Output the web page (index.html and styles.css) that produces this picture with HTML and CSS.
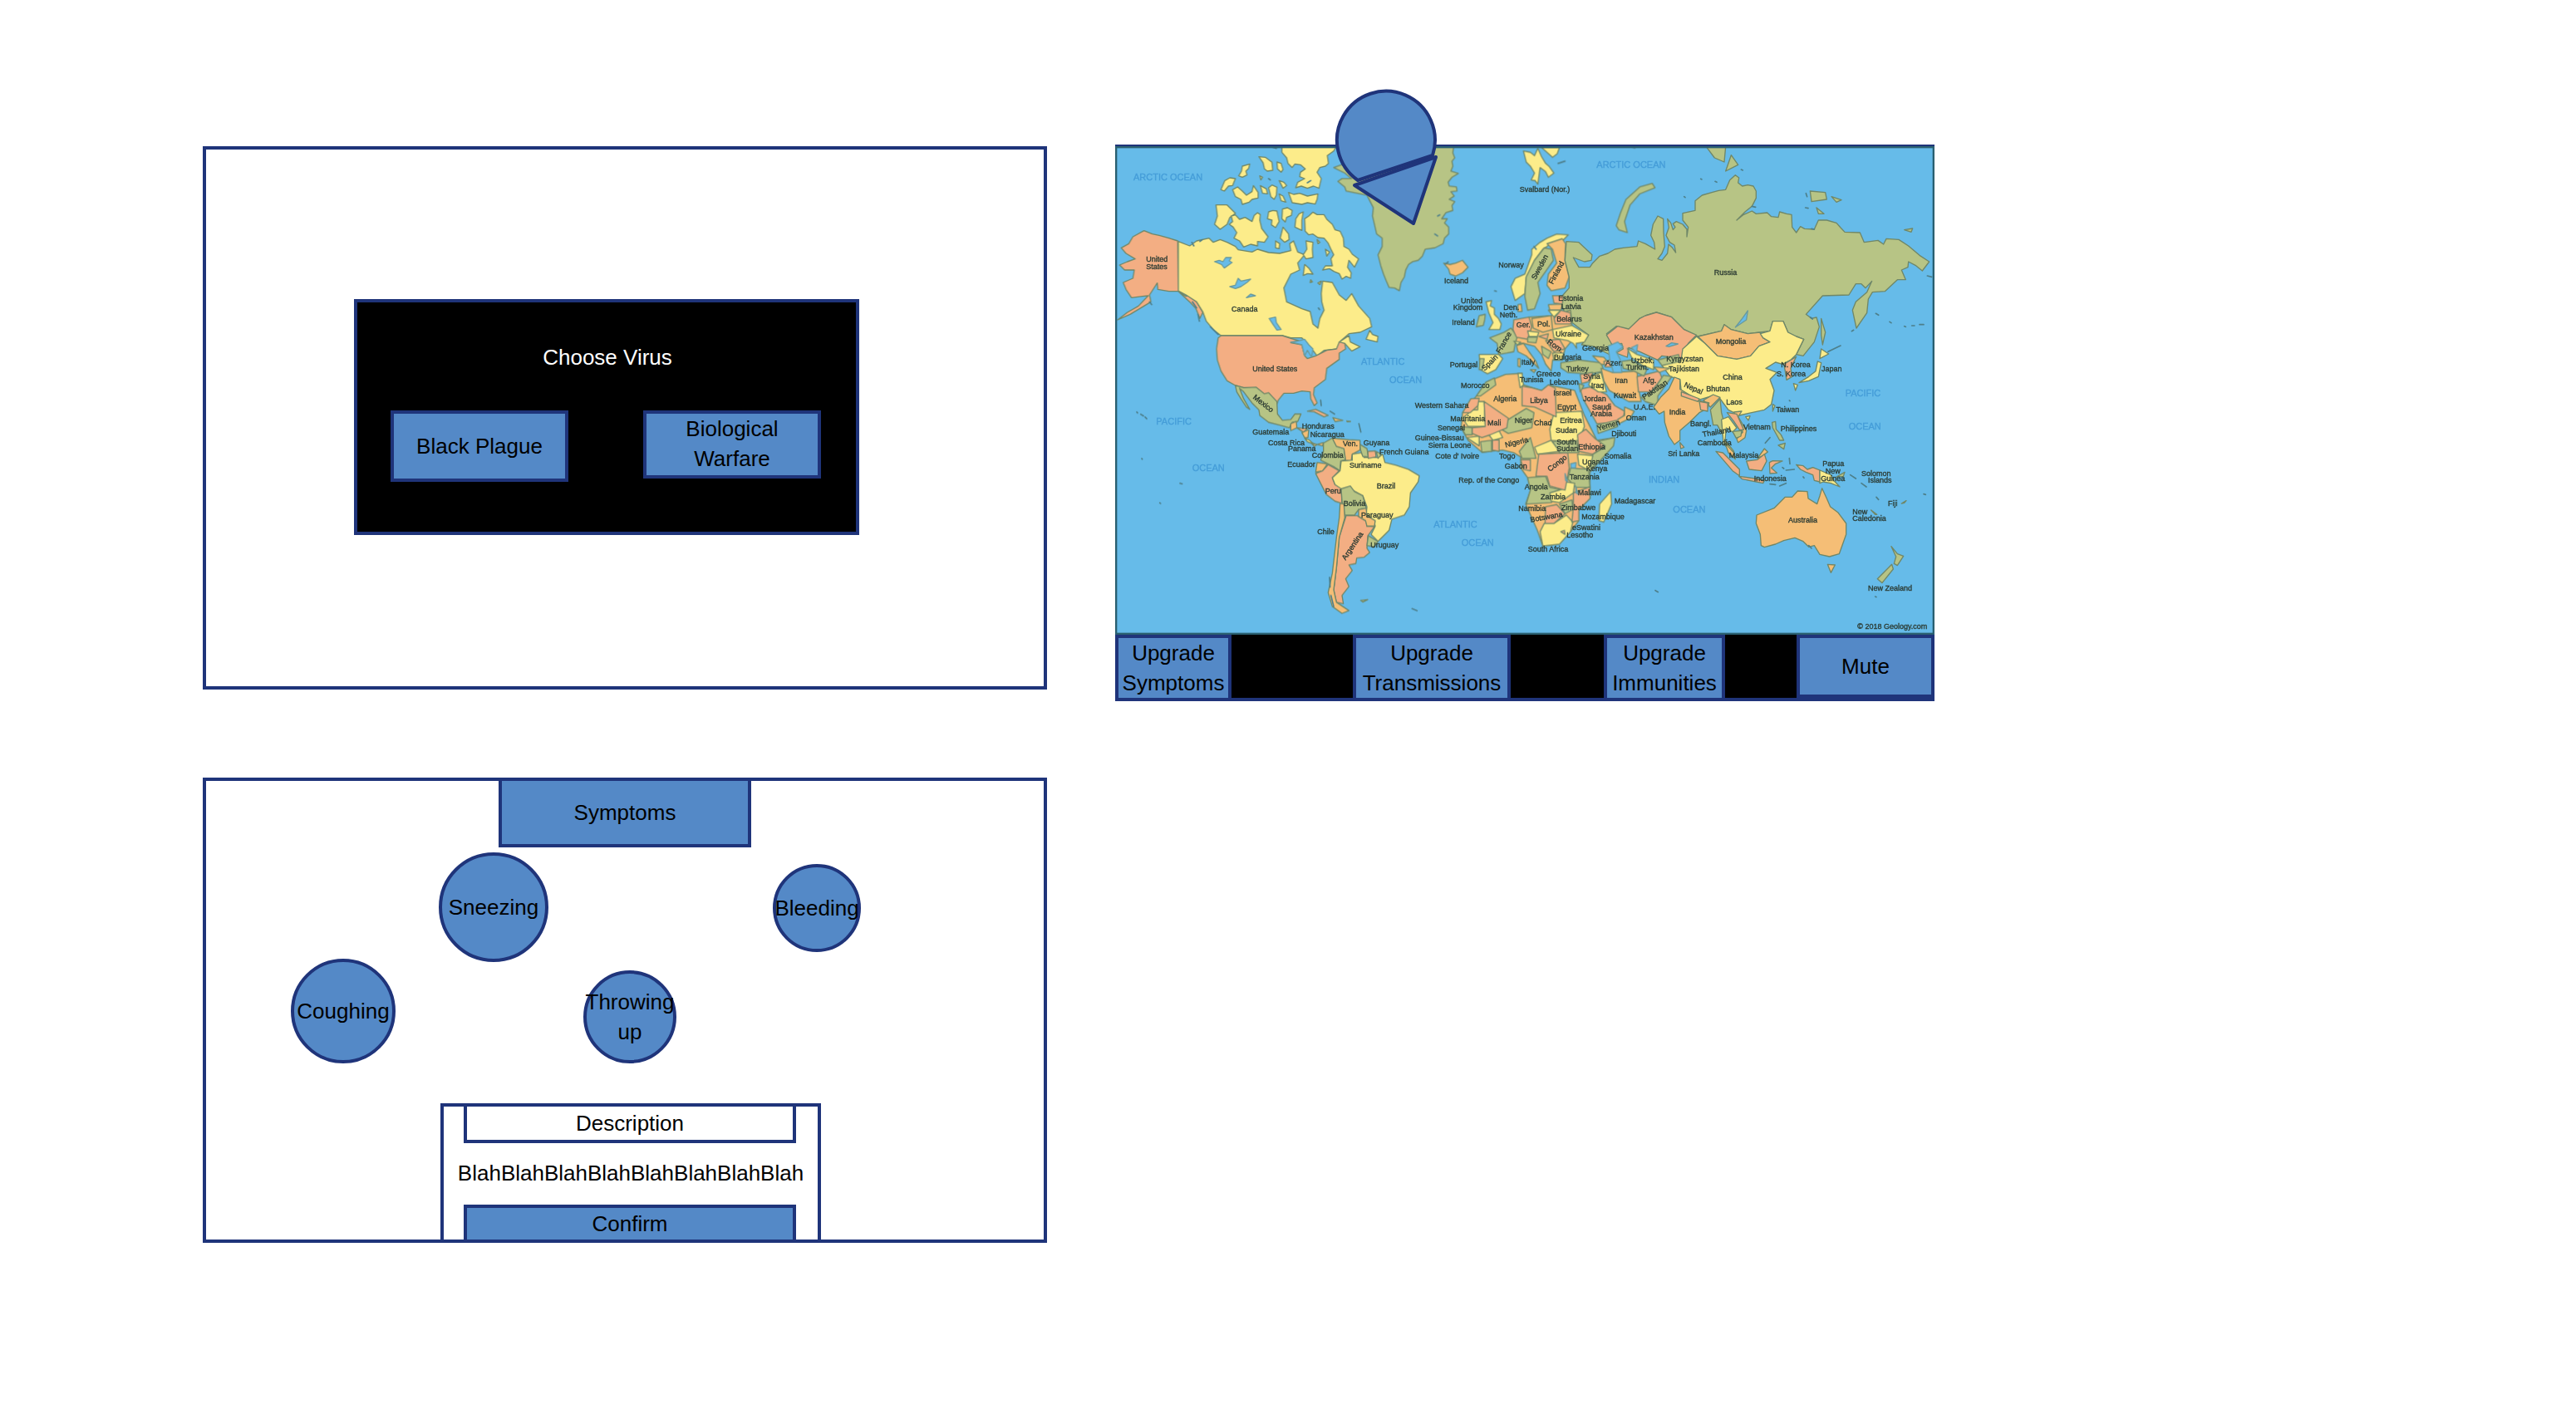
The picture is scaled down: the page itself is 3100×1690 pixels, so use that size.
FILE: index.html
```html
<!DOCTYPE html>
<html lang="en">
<head>
<meta charset="utf-8">
<title>Virus game wireframes</title>
<link rel="stylesheet" href="styles.css">
</head>
<body>
<main class="board">
  <section class="screen screen-choose">
    <div class="dialog">
      <h2 class="dialog-title">Choose Virus</h2>
      <div class="dialog-actions">
        <button class="box-button tall" type="button">Black Plague</button>
        <button class="box-button" type="button">Biological Warfare</button>
      </div>
    </div>
  </section>

  <section class="screen-map">
    <svg class="map" viewBox="0 0 2958 1764" role="img" aria-label="World map">
      <defs>
        <filter id="soft" x="0" y="0" width="100%" height="100%"><feGaussianBlur stdDeviation="2"/></filter>
      </defs>
      <rect class="sea" width="2958" height="1764"/>
      <g filter="url(#soft)">
      <g class="land">
        <!-- North America -->
        <g transform="translate(-6 -228)">
          <path class="s" d="M232 570L200 560L165 550L140 545L110 533L70 555L55 580L28 595L45 615L78 635L50 645L22 657L40 675L75 675L70 705L35 720L45 745L65 775L105 770L125 768L90 805L50 828L15 855L60 835L110 805L135 790L130 765L158 722L160 745L200 752L234 752L262 770L285 765L322 828L312 850L298 815L280 795L234 752Z"/>
          <path class="y" d="M234 572L275 588L300 570L345 560L360 575L385 565L410 575L440 590L450 602L500 610L520 600L560 612L600 615L640 605L636 580L650 570L665 610L690 620L665 650L672 675L640 690L615 740L625 790L680 815L710 825L720 870L738 885L745 850L760 820L752 790L750 760L755 715L790 720L815 765L840 785L860 760L885 805L925 850L932 880L890 900L850 905L815 935L850 912L855 935L890 952L860 968L835 940L810 960L760 965L735 985L720 965L700 940L680 920L640 920L610 912L388 912L360 890L335 860L322 825L300 790L262 765L234 750Z"/>
          <path class="s" d="M388 912L610 912L640 922L668 930L640 938L680 945L690 985L700 995L730 985L770 965L805 960L815 935L835 940L838 960L815 975L815 998L770 1030L765 1070L725 1100L722 1125L735 1155L725 1165L712 1140L710 1115L680 1112L650 1120L615 1120L595 1145L590 1158L575 1140L560 1120L545 1125L515 1100L470 1100L440 1092L410 1075L388 1040L375 1000L372 960L378 920Z"/>
          <path class="y" d="M608 230L805 230L795 245L772 262L776 290L765 300L745 305L735 322L750 345L742 380L722 372L700 380L678 372L658 378L665 358L690 345L672 338L675 322L692 310L675 295L655 292L645 305L630 290L625 270L608 250Z
            M525 266L548 268L572 286L575 315L555 318L545 310L540 288ZM590 285L605 290L612 312L605 322L592 310ZM465 300L492 292L488 308L478 318L482 332L465 340L452 335L462 318ZM388 385L402 352L420 342L440 345L430 370L415 372L400 390ZM430 385L448 375L465 390L480 405L500 392L505 370L522 395L522 415L500 420L490 430L465 438L460 420L440 410ZM530 370L552 382L556 400L538 398ZM528 335L538 340L532 350ZM560 378L572 368L590 376L588 405L580 420L568 410ZM632 395L650 402L672 398L700 408L738 400L735 420L728 437L700 432L680 438L645 432ZM598 400L612 408L622 430L605 425ZM598 352L615 358L625 370L612 380Z
            M370 440L410 440L425 455L440 470L420 485L410 510L385 528L365 510L375 480Z
            M425 480L440 476L455 492L475 485L500 500L508 478L520 468L530 475L528 495L535 525L558 555L545 575L520 572L520 588L495 582L470 592L455 570L435 560L445 540L432 520L418 510L430 500Z
            M560 465L575 460L590 462L598 500L585 522L570 512L572 495L556 490ZM610 455L628 450L645 460L642 478L625 485L620 502L608 490ZM612 520L632 545L634 565L618 575L602 560Z
            M655 520L658 490L670 472L685 465L680 495L680 532ZM692 535L690 490L705 480L720 466L735 475L760 475L770 492L790 510L800 530L818 535L830 560L832 590L850 600L862 618L885 635L870 665L850 640L845 665L858 685L856 705L840 698L825 708L815 688L795 680L780 670L755 675L765 660L790 660L785 635L795 620L785 600L775 578L760 560L738 558L720 545L705 548Z
            M695 570L720 575L718 600L720 630L695 635L685 620L698 600ZM765 600L780 610L770 625ZM690 655L705 668L720 690L700 688L685 695ZM585 570L600 580L598 598L585 595ZM735 565L745 575L738 580ZM712 710L718 718L710 720ZM738 722L750 715L745 728ZM912 925L925 893L935 908L955 915L952 935Z"/>
          <path class="w" d="M365 645L382 640L395 645L405 630L425 630L418 642L428 648L400 668L390 655ZM420 735L440 730L450 705L460 715L495 708L482 720L460 735L440 742ZM480 775L495 762L512 768L492 772ZM562 850L585 845L588 865L605 890L590 892L575 870ZM640 935L665 932L690 925L705 945L720 960L715 990L700 965L690 985L680 945Z"/>
          <path class="dots" d="M283 575L290 588M312 572L320 566M350 880L378 908M305 835L310 860M285 790L300 812M130 790L138 800M740 812L744 818M575 232L588 236M700 360L712 352M560 345L566 350"/>
        </g>

        <!-- Central and South America -->
        <g transform="translate(-6 762)">
          <path class="g" d="M440 102L470 110L515 108L545 132L560 128L590 160L592 205L610 228L640 225L655 205L677 205L665 232L645 235L635 255L600 245L560 235L528 210L525 190L500 165L470 125L455 112L470 150L492 188L480 180L460 150L445 125Z"/>
          <path class="o" d="M640 240L660 232L662 255L640 265ZM680 272L705 262L702 290L690 290ZM712 308L735 315L758 308L755 320L735 315L725 322ZM792 218L828 228L800 232ZM842 230L856 232L844 233Z"/>
          <path class="s" d="M662 255L700 258L685 270ZM700 195L730 188L775 210L760 215L725 197Z"/>
          <path class="y" d="M690 292L708 300L725 315L700 305Z"/>
          <path class="g" d="M758 310L790 292L805 320L832 330L838 370L820 375L818 410L795 395L765 380L748 372L758 340Z"/>
          <path class="o" d="M790 292L850 298L890 300L890 335L862 350L858 375L838 372L832 330L805 322Z"/>
          <path class="o" d="M735 380L772 385L755 410L730 415Z"/>
          <path class="s" d="M730 420L755 410L775 388L815 410L790 435L800 460L822 470L825 528L800 520L768 495L745 450Z"/>
          <path class="y" d="M862 350L895 345L905 362L955 362L972 350L980 380L1020 390L1065 405L1104 428L1100 450L1072 490L1068 540L1050 570L1005 585L995 625L955 665L930 640L945 610L940 590L912 570L915 540L900 500L855 475L822 475L800 460L790 435L818 410L822 375L862 372Z"/>
          <path class="g" d="M890 315L915 330L920 360L900 358L892 335ZM948 340L968 350L955 365Z"/>
          <path class="s" d="M918 340L945 338L948 360L920 365Z"/>
          <path class="g" d="M822 475L855 465L870 485L900 500L912 545L885 550L870 570L835 570L825 520Z"/>
          <path class="s" d="M840 572L880 572L912 592L915 610L942 612L918 645L915 690L925 705L905 722L878 725L875 745L850 750L862 770L838 800L850 828L825 860L830 890L805 885L795 840L805 760L815 650Z"/>
          <path class="o" d="M885 550L912 545L915 572L945 590L942 610L915 610L910 590L885 575Z"/>
          <path class="o" d="M818 528L832 530L835 580L815 650L805 760L795 840L805 885L850 915L825 925L790 900L775 850L790 780L805 650L815 580Z"/>
          <path class="g" d="M920 645L955 665L940 685L915 680ZM892 878L918 875L900 884Z"/>
          <path class="dots" d="M98 206L108 212M114 216L120 222M84 198L87 201M886 240L893 270M748 155L750 175M782 195L798 205M780 795L782 830M785 860L795 900M1078 908L1096 915M102 366L104 368M240 455L248 457M167 526L170 528"/>
        </g>

        <!-- Greenland, the north Atlantic and Scandinavia -->
        <g transform="translate(954 -228)">
          <path class="g" d="M-165 305L-110 285L0 228L268 230L265 252L272 270L262 282L265 300L258 318L285 326L262 340L248 358L252 372L278 375L280 390L258 392L270 408L252 420L272 428L262 442L265 460L240 468L225 490L245 490L235 505L250 520L250 545L235 560L230 580L200 595L165 600L155 625L140 640L120 645L105 655L95 675L90 700L78 720L72 750L55 740L35 738L25 715L15 690L5 660L-5 620L10 590L10 560L-10 545L-18 510L-25 480L-22 450L-45 405L-120 390L-125 375L-150 355L-135 345L-100 345L-125 325Z"/>
          <path class="o" d="M232 650L255 655L275 650L300 640L320 665L300 685L275 697L255 690L250 672Z"/>
          <path class="y" d="M520 245L545 250L560 262L572 235L585 265L600 290L612 300L630 325L610 340L600 320L580 305L572 365L562 352L548 350L560 325L545 300L530 285ZM585 232L650 232L642 255L625 268L605 250Z"/>
          <path class="y" d="M385 790L405 785L400 805L415 812L415 835L430 850L440 870L435 890L395 890L410 865L395 830Z"/>
          <path class="g" d="M360 840L382 835L380 855L375 875L350 880Z"/>
          <path class="y" d="M475 735L490 705L525 690L550 620L550 600L580 575L605 560L640 545L682 548L660 570L620 580L590 600L560 640L530 700L525 760L490 785Z"/>
          <path class="g" d="M595 595L620 600L628 640L600 680L572 720L580 760L560 815L535 820L525 770L530 700L560 640Z"/>
          <path class="o" d="M605 580L660 562L672 580L670 640L685 700L670 740L620 750L605 730L610 690L640 650L625 600ZM500 800L512 798L515 825L500 825Z"/>
          <path class="g" d="M855 515L870 470L890 420L940 375L985 362L995 378L940 400L905 440L885 500L895 540L865 530Z"/>
          <path class="dots" d="M240 652L248 646M645 290L670 282M416 750L422 752M558 590L566 600M915 232L922 234M210 480L218 476M200 545L210 552"/>
        </g>

        <!-- Russia, central Asia and China -->
        <g transform="translate(1914 -18)">
          <path class="g" d="M-285 362L-240 365L-192 410L-195 430L-220 435L-260 420L-240 455L-200 455L-190 440L-165 415L-135 405L-110 390L-80 385L-30 380L-25 360L0 370L35 390L32 365L20 340L28 300L45 270L65 280L66 330L70 380L60 405L45 425L60 430L80 405L84 372L98 385L110 402L105 375L88 365L75 340L85 312L80 280L92 295L100 320L108 310L100 298L112 290L135 300L150 318L150 345L155 310L135 285L135 260L180 250L180 215L205 195L240 185L265 178L290 175L305 140L325 122L338 132L335 150L350 162L370 158L390 162L400 180L400 205L385 235L360 255L330 285L355 265L385 252L400 262L440 258L455 272L480 275L485 255L510 262L528 265L530 310L545 330L560 308L575 316L610 318L625 285L655 285L690 295L705 312L720 328L775 330L790 365L840 358L860 372L870 352L915 355L950 378L990 412L1025 435L1000 468L975 448L950 435L948 455L925 465L940 500L910 500L865 542L820 545L805 570L800 620L762 675L748 610L760 580L800 545L818 505L795 530L780 515L760 515L735 555L640 558L580 625L600 640L618 636L628 670L610 725L570 775L545 770L572 715L545 705L515 690L498 650L460 650L450 685L415 690L370 695L310 680L285 662L275 685L190 705L140 680L95 635L40 618L0 630L-20 640L-60 680L-105 668L-140 695L-125 720L-110 780L-140 765L-190 740L-230 735L-205 700L-245 670L-270 650L-295 610L-310 570L-275 530L-275 490L-290 430Z"/>
          <path class="g" d="M220 20L290 20L285 75L250 60ZM310 50L335 85L290 108ZM595 180L650 185L655 210L600 218ZM672 200L708 212L690 220ZM618 240L645 262L625 262ZM935 320L965 315L960 328ZM635 640L650 690L640 735L635 700Z"/>
          <path class="s" d="M0 630L40 618L95 635L140 680L185 700L155 730L130 785L60 775L45 790L-20 760L-60 745L-65 780L-105 765L-80 750L-85 730L-120 735L-140 700L-100 668L-60 678L-20 640Z"/>
          <path class="o" d="M190 705L275 685L285 662L310 680L370 695L415 690L425 710L450 725L410 740L380 775L330 787L260 775L215 730Z"/>
          <path class="y" d="M185 705L215 730L260 775L330 787L380 775L410 740L450 725L425 710L415 695L450 685L460 650L498 650L515 690L545 705L572 715L545 770L525 790L495 805L470 798L435 820L475 835L450 860L465 900L455 950L430 970L370 983L340 990L300 970L270 930L240 920L190 935L130 905L125 860L90 850L60 810L130 785L135 750Z"/>
          <path class="s" d="M500 805L545 778L525 820L530 850L510 862L505 830Z"/>
          <path class="y" d="M635 750L662 768L630 785ZM622 795L635 800L625 850L590 865L555 872L590 850L615 830ZM535 875L550 880L542 900ZM460 950L468 955L460 975Z"/>
          <path class="w" d="M370 612L365 645L325 672L350 640ZM75 740L95 728L118 732L85 742Z"/>
          <path class="dots" d="M140 200L144 203M200 136L204 138M252 145L258 148M346 102L352 105M580 188L584 200M600 316L610 318M660 760L705 738M832 622L842 628M882 652L888 656M935 668L940 670M962 666L972 666M990 662L1005 662M1018 486L1034 490M745 686L752 682M596 636L604 642M385 235L398 238M578 240L588 242"/>
        </g>

        <!-- Europe, the Middle East and Africa -->
        <g transform="translate(1074 612)">
          <path class="o" d="M362 50L420 5L500 0L570 -20L575 35L600 60L550 120L540 160L505 160L500 200L480 175L465 140L440 110L400 100L370 100Z"/>
          <path class="g" d="M278 80L330 60L355 45L378 75L370 100L365 130L340 135L310 140L305 100Z"/>
          <path class="y" d="M240 140L310 140L325 155L300 195L270 210L245 195Z"/>
          <path class="g" d="M242 155L258 155L252 195L240 195Z"/>
          <path class="s" d="M365 15L420 5L430 40L415 85L375 78L362 50ZM510 10L535 -20L570 -10L572 30L515 30ZM505 -72L545 -72L540 -42L510 -46ZM480 90L530 85L550 120L510 130ZM455 75L490 65L485 85Z"/>
          <path class="o" d="M430 10L500 0L505 50L470 60L435 45ZM490 -40L540 -42L535 -20L495 -20ZM375 108L400 100L420 130L445 165L455 190L435 170L410 145L380 130ZM380 155L388 155L388 185L380 182ZM425 195L445 195L438 205Z"/>
          <path class="y" d="M505 50L575 35L635 70L620 95L590 100L592 118L580 100L560 90L510 80ZM415 55L455 60L450 75L420 75ZM365 92L390 95L378 105ZM505 135L545 135L540 160L510 160ZM490 -20L535 -20L510 5Z"/>
          <path class="g" d="M465 110L500 130L490 155L470 140ZM415 78L450 78L445 98L415 95ZM535 170L600 160L680 170L690 200L640 210L560 205L535 188Z"/>
          <path class="o" d="M650 145L690 150L715 180L680 175ZM680 190L720 205L810 200L815 260L825 310L780 310L710 270L690 235Z"/>
          <path class="s" d="M605 212L650 205L645 235L610 245ZM690 165L715 160L718 185L695 185ZM810 220L890 200L900 225L860 275L815 275ZM605 265L640 258L700 285L730 325L765 345L760 370L730 385L665 390L640 345L615 300Z"/>
          <path class="y" d="M650 215L680 205L700 275L670 275L635 250ZM775 118L810 140L870 160L870 195L830 180L790 150Z"/>
          <path class="g" d="M755 165L790 160L845 195L835 218L800 200L760 190ZM825 295L870 270L905 215L935 220L885 290L885 325L840 310ZM885 160L960 140L965 165L900 180ZM665 395L735 378L740 400L670 425ZM600 245L618 252L605 275Z"/>
          <path class="o" d="M870 185L930 190L890 205ZM765 330L800 345L785 370L745 390L740 375L765 360Z"/>
          <path class="w" d="M705 110L740 95L760 112L735 130L750 160L755 205L725 205L712 160ZM790 115L812 105L808 135Z"/>
          <path class="o" d="M265 240L335 212L395 208L400 250L465 270L490 250L585 270L620 360L665 450L730 440L680 520L640 565L640 660L600 700L600 740L570 780L530 825L470 832L450 775L408 680L425 630L415 585L390 550L390 510L365 495L325 485L250 493L200 450L175 405L180 350L230 290Z"/>
          <path class="g" d="M230 290L265 240L295 225L300 250L245 290ZM345 375L410 335L438 350L430 405L345 425L320 410ZM505 455L590 445L600 495L530 495ZM175 400L215 405L215 430L190 430ZM245 455L285 450L285 490L250 493ZM385 490L425 440L445 515L395 515ZM660 455L730 440L725 470L680 520L640 555L650 500L695 475ZM570 550L635 555L640 620L590 620L560 590ZM415 585L480 580L495 620L545 630L500 675L410 680L425 630ZM530 680L575 665L578 700L550 715Z"/>
          <path class="y" d="M380 208L395 208L400 250L388 260ZM205 350L208 340L235 340L235 310L258 310L262 400L200 400L180 370ZM510 350L610 345L620 400L600 450L560 455L500 450L495 410ZM195 440L240 435L240 470ZM275 430L310 412L325 440L290 450ZM440 475L500 450L530 490L450 500ZM595 500L650 505L640 560L600 540ZM495 640L545 625L550 600L585 605L580 640L530 675L500 670ZM460 780L475 750L510 750L555 720L578 745L570 780L530 825L470 832ZM715 635L718 680L690 745L672 740L675 680Z"/>
          <path class="s" d="M395 255L430 260L465 270L490 250L515 262L518 365L440 330L395 325ZM180 350L210 300L240 298L235 325L208 350ZM258 310L345 370L340 405L280 430L250 440L215 425L215 405L262 400ZM288 450L312 448L312 490L288 485ZM595 430L625 410L660 445L695 470L650 500L600 490ZM455 500L560 495L565 550L550 630L495 615L485 580L445 580ZM390 520L425 520L425 560L400 555ZM580 640L640 618L640 660L600 700L600 740L575 745L580 690ZM480 690L520 682L550 715L510 750L478 750ZM535 780L548 775L550 790Z"/>
          <path class="w" d="M570 535L590 530L588 550L572 550ZM550 570L560 600L552 595ZM588 615L598 645L590 640Z"/>
        </g>

        <!-- India, south-east Asia and Oceania -->
        <g transform="translate(1944 762)">
          <path class="o" d="M75 72L95 80L95 115L160 155L200 165L195 185L165 200L130 235L95 265L95 300L75 315L55 285L40 235L38 195L20 205L0 180L25 145L55 115ZM180 155L215 135L240 145L205 180Z"/>
          <path class="s" d="M100 125L165 150L160 160L100 140ZM165 160L195 165L195 195L170 190ZM95 308L110 325L98 330Z"/>
          <path class="g" d="M205 190L240 150L245 200L255 240L255 290L230 245L215 245Z"/>
          <path class="y" d="M245 225L270 215L300 255L285 270L262 255L258 300L290 340L280 345L252 310ZM332 215L348 212L342 228Z"/>
          <path class="o" d="M290 198L318 195L305 215L335 265L330 290L305 308L300 295L322 270ZM258 310L290 345L295 368L270 345ZM375 365L400 330L412 342L395 355Z"/>
          <path class="s" d="M265 200L300 205L325 262L310 262L290 232ZM225 340L250 345L310 405L310 428L285 410ZM308 430L365 438L400 445L395 455L320 440ZM335 375L375 370L400 350L408 375L390 410L345 405ZM425 400L440 385L465 375L430 374L418 380L420 420L445 418ZM515 388L540 392L555 405L575 398L600 408L600 450L580 445L575 425L550 415L530 405Z"/>
          <path class="g" d="M285 268L318 265L315 285L298 292ZM428 235L440 232L442 260L460 280L470 300L455 300L430 255ZM450 318L475 310L470 332ZM660 432L690 415L685 430ZM858 683L880 710L902 718L880 752L868 745L875 720ZM860 748L865 765L825 815L808 800ZM895 528L912 518L905 526ZM785 552L806 568L800 568Z"/>
          <path class="y" d="M600 408L640 425L650 445L672 468L640 455L612 450L600 455Z"/>
          <path class="o" d="M372 570L435 545L475 505L500 505L520 483L555 485L558 510L590 530L600 500L608 473L625 510L638 540L665 560L695 600L695 640L670 710L635 720L600 712L580 680L560 685L540 665L510 652L470 662L440 675L400 686L388 680L385 640L370 600ZM628 748L655 750L640 778Z"/>
          <path class="dots" d="M420 290L403 310M490 365L492 385M465 398L470 402M478 408L508 405M540 432L543 436M455 465L478 455M420 458L440 460M710 425L730 438M750 455L768 468M804 505L812 514M975 494L982 496M560 680L570 690M6 842L16 848M800 864L804 866M490 156L492 158"/>
        </g>
      </g>

      <g class="oceans">
        <text x="66" y="124">ARCTIC OCEAN</text>
        <text x="1738" y="78">ARCTIC OCEAN</text>
        <text x="148" y="1006">PACIFIC</text>
        <text x="278" y="1172">OCEAN</text>
        <text x="888" y="790">ATLANTIC</text>
        <text x="990" y="854">OCEAN</text>
        <text x="1150" y="1378">ATLANTIC</text>
        <text x="1250" y="1442">OCEAN</text>
        <text x="1926" y="1216">INDIAN</text>
        <text x="2014" y="1322">OCEAN</text>
        <text x="2636" y="904">PACIFIC</text>
        <text x="2648" y="1024">OCEAN</text>
      </g>

      <g class="places">
        <text x="112" y="416">United</text><text x="112" y="444">States</text>
        <text x="420" y="598">Canada</text>
        <text x="496" y="812">United States</text>
        <text transform="translate(496 910) rotate(38)">Mexico</text>
        <text x="496" y="1040">Guatemala</text>
        <text x="674" y="1020">Honduras</text>
        <text x="704" y="1050">Nicaragua</text>
        <text x="552" y="1080">Costa Rica</text>
        <text x="624" y="1100">Panama</text>
        <text x="822" y="1084">Ven.</text>
        <text x="896" y="1080">Guyana</text>
        <text x="954" y="1112">French Guiana</text>
        <text x="710" y="1124">Colombia</text>
        <text x="846" y="1160">Suriname</text>
        <text x="622" y="1158">Ecuador</text>
        <text x="944" y="1236">Brazil</text>
        <text x="758" y="1254">Peru</text>
        <text x="824" y="1298">Bolivia</text>
        <text x="888" y="1342">Paraguay</text>
        <text x="730" y="1402">Chile</text>
        <text x="922" y="1450">Uruguay</text>
        <text transform="translate(832 1496) rotate(-56)">Argentina</text>

        <text x="1460" y="164">Svalbard (Nor.)</text>
        <text x="1188" y="494">Iceland</text>
        <text x="1384" y="438">Norway</text>
        <text transform="translate(1518 484) rotate(-62)">Sweden</text>
        <text transform="translate(1580 500) rotate(-62)">Finland</text>
        <text x="1248" y="566">United</text><text x="1220" y="592">Kingdom</text>
        <text x="1216" y="646">Ireland</text>
        <text x="1402" y="590">Den.</text><text x="1388" y="618">Neth.</text>
        <text x="1448" y="654">Ger.</text><text x="1524" y="652">Pol.</text>
        <text x="1600" y="558">Estonia</text><text x="1610" y="588">Latvia</text>
        <text x="1594" y="632">Belarus</text><text x="1590" y="686">Ukraine</text>
        <text transform="translate(1390 750) rotate(-60)">France</text>
        <text transform="translate(1334 812) rotate(-45)">Spain</text>
        <text transform="translate(1558 710) rotate(35)">Rom.</text>
        <text x="1208" y="798">Portugal</text>
        <text x="1466" y="788">Italy</text>
        <text x="1520" y="832">Greece</text>
        <text x="1584" y="772">Bulgaria</text>
        <text x="1686" y="738">Georgia</text>
        <text x="1628" y="812">Turkey</text>
        <text x="1770" y="792">Azer.</text>
        <text x="2162" y="464">Russia</text>
        <text x="1874" y="698">Kazakhstan</text>
        <text x="2168" y="714">Mongolia</text>
        <text x="1844" y="808">Turkm.</text><text x="1862" y="782">Uzbek.</text>
        <text x="1990" y="778">Kyrgyzstan</text>
        <text x="1998" y="812">Tajikistan</text>
        <text x="2194" y="844">China</text>
        <text x="2404" y="798">N. Korea</text><text x="2388" y="832">S. Korea</text>
        <text x="2550" y="812">Japan</text>
        <text transform="translate(2052 868) rotate(24)">Nepal</text>
        <text x="2134" y="886">Bhutan</text>
        <text x="2206" y="934">Laos</text>
        <text x="2386" y="960">Taiwan</text>
        <text x="2000" y="968">India</text>
        <text x="2076" y="1010">Bangl.</text>
        <text transform="translate(2122 1050) rotate(-10)">Thailand</text>
        <text x="2102" y="1080">Cambodia</text>
        <text x="2268" y="1022">Vietnam</text>
        <text x="2402" y="1028">Philippines</text>
        <text x="1996" y="1118">Sri Lanka</text>
        <text x="2216" y="1126">Malaysia</text>
        <text x="2306" y="1208">Indonesia</text>
        <text x="2554" y="1154">Papua</text><text x="2564" y="1182">New</text><text x="2548" y="1210">Guinea</text>
        <text x="2694" y="1190">Solomon</text><text x="2718" y="1216">Islands</text>
        <text x="2790" y="1298">Fiji</text>
        <text x="2662" y="1328">New</text><text x="2662" y="1354">Caledonia</text>
        <text x="2430" y="1360">Australia</text>
        <text x="2718" y="1604">New Zealand</text>

        <text x="1248" y="872">Morocco</text>
        <text x="1366" y="920">Algeria</text>
        <text x="1498" y="926">Libya</text>
        <text x="1460" y="852">Tunisia</text>
        <text x="1568" y="862">Lebanon</text>
        <text x="1582" y="900">Israel</text>
        <text x="1596" y="950">Egypt</text>
        <text x="1690" y="840">Syria</text><text x="1718" y="872">Iraq</text>
        <text x="1690" y="920">Jordan</text>
        <text x="1804" y="856">Iran</text>
        <text x="1906" y="856">Afg.</text>
        <text transform="translate(1910 916) rotate(-34)">Pakistan</text>
        <text x="1800" y="910">Kuwait</text>
        <text x="1872" y="952">U.A.E.</text>
        <text x="1844" y="990">Oman</text>
        <text x="1722" y="950">Saudi</text><text x="1716" y="976">Arabia</text>
        <text transform="translate(1744 1028) rotate(-16)">Yemen</text>
        <text x="1792" y="1046">Djibouti</text>
        <text x="1082" y="944">Western Sahara</text>
        <text x="1210" y="994">Mauritania</text>
        <text x="1164" y="1026">Senegal</text>
        <text x="1082" y="1062">Guinea-Bissau</text>
        <text x="1130" y="1090">Sierra Leone</text>
        <text x="1156" y="1128">Cote d' Ivoire</text>
        <text x="1344" y="1008">Mali</text><text x="1442" y="998">Niger</text>
        <text x="1512" y="1008">Chad</text>
        <text x="1606" y="1000">Eritrea</text>
        <text x="1590" y="1034">Sudan</text>
        <text x="1594" y="1076">South</text><text x="1594" y="1102">Sudan</text>
        <text transform="translate(1410 1088) rotate(-14)">Nigeria</text>
        <text x="1386" y="1128">Togo</text>
        <text x="1406" y="1164">Gabon</text>
        <text x="1672" y="1096">Ethiopia</text>
        <text x="1766" y="1128">Somalia</text>
        <text x="1686" y="1148">Uganda</text>
        <text x="1700" y="1174">Kenya</text>
        <text transform="translate(1570 1176) rotate(-38)">Congo</text>
        <text x="1240" y="1216">Rep. of the Congo</text>
        <text x="1640" y="1204">Tanzania</text>
        <text x="1478" y="1240">Angola</text>
        <text x="1536" y="1274">Zambia</text>
        <text x="1670" y="1260">Malawi</text>
        <text x="1456" y="1316">Namibia</text>
        <text x="1610" y="1314">Zimbabwe</text>
        <text transform="translate(1500 1358) rotate(-10)">Botswana</text>
        <text x="1684" y="1346">Mozambique</text>
        <text x="1802" y="1290">Madagascar</text>
        <text x="1650" y="1386">eSwatini</text>
        <text x="1630" y="1414">Lesotho</text>
        <text x="1490" y="1464">South Africa</text>
        <text x="2680" y="1742">© 2018 Geology.com</text>
      </g>
      <rect class="map-edge" x="0" y="0" width="2958" height="1764"/>
      </g>
    </svg>

    <svg class="pin" viewBox="0 0 126 170" aria-hidden="true">
      <path d="M29 113A59 59 0 1 1 119 83Z"/>
      <path d="M25 119L123 85L96 165Z"/>
    </svg>

    <nav class="toolbar">
      <button class="tool tool-symptoms" type="button">Upgrade Symptoms</button>
      <button class="tool tool-transmissions" type="button">Upgrade Transmissions</button>
      <button class="tool tool-immunities" type="button">Upgrade Immunities</button>
      <button class="tool tool-mute" type="button">Mute</button>
    </nav>
  </section>

  <section class="screen screen-symptoms">
    <h2 class="tab">Symptoms</h2>
    <button class="bubble sneezing" type="button">Sneezing</button>
    <button class="bubble bleeding" type="button">Bleeding</button>
    <button class="bubble coughing" type="button">Coughing</button>
    <button class="bubble throwing" type="button">Throwing up</button>
    <div class="detail">
      <h3 class="detail-title">Description</h3>
      <p class="detail-text">BlahBlahBlahBlahBlahBlahBlahBlah</p>
      <button class="confirm" type="button">Confirm</button>
    </div>
  </section>
</main>
</body>
</html>
```
FILE: styles.css
```css
:root {
  --fill: #5489c7;
  --line: #1f347a;
}

* {
  box-sizing: border-box;
}

body {
  margin: 0;
  background: #fff;
  color: #000;
  font: 26px/36px "Liberation Sans", Arial, sans-serif;
}

h2, h3, p {
  margin: 0;
  font-size: 26px;
  font-weight: 400;
}

button {
  display: flex;
  align-items: center;
  justify-content: center;
  padding: 0;
  border: 4px solid var(--line);
  border-radius: 0;
  background: var(--fill);
  color: #000;
  font: inherit;
  text-align: center;
}

.board {
  display: grid;
  grid-template-columns: 1016fr 986fr;
  column-gap: 82px;
  row-gap: 92px;
  align-items: start;
  padding: 174px 772px 190px 244px;
}

.screen {
  border: 4px solid var(--line);
}

/* Virus selection */
.screen-choose {
  min-height: 654px;
  margin-top: 2px;
  padding: 180px 178px;
}

.dialog {
  width: 608px;
  padding: 48px 38px 60px 40px;
  border: 4px solid var(--line);
  background: #000;
  color: #fff;
}

.dialog-title {
  text-align: center;
}

.dialog-actions {
  display: flex;
  align-items: flex-start;
  gap: 90px;
  margin-top: 46px;
}

.box-button {
  width: 214px;
  min-height: 82px;
  padding: 0 40px 2px;
}

.box-button.tall {
  min-height: 86px;
  padding: 0;
}

/* World map */
.screen-map {
  position: relative;
  border-top: 2px solid var(--line);
}

.map {
  display: block;
  width: 100%;
  height: auto;
}

.sea {
  fill: #66bbe9;
}

.land path {
  stroke: #6f8768;
  stroke-width: 4;
  stroke-linejoin: round;
}

.land .y { fill: #fcec8a; }
.land .s { fill: #f3ae83; }
.land .o { fill: #f5be76; }
.land .g { fill: #b7c485; }

.land .w {
  fill: #66bbe9;
  stroke: #6a9a9c;
}

.land .dots {
  fill: none;
  stroke: #4d7f8a;
  stroke-width: 5;
  stroke-linecap: round;
}

.oceans {
  fill: #459dd8;
  stroke: #459dd8;
  stroke-width: 1;
  font-size: 33px;
}

.places {
  fill: #2c3b33;
  stroke: #2c3b33;
  stroke-width: 1;
  font-size: 27px;
}

.map-edge {
  fill: none;
  stroke: #2c5f70;
  stroke-width: 14;
}

.pin {
  position: absolute;
  top: -72px;
  left: 263px;
  width: 126px;
  height: 170px;
}

.pin path {
  fill: var(--fill);
  stroke: var(--line);
  stroke-width: 4;
  stroke-linejoin: round;
}

.toolbar {
  display: grid;
  grid-template-columns: 140fr 146fr 190fr 112fr 146fr 86fr 166fr;
  min-height: 80px;
  border-bottom: 4px solid var(--line);
  background: #000;
}

.tool {
  border-bottom: 0;
}

.tool-transmissions { grid-column: 3; }
.tool-immunities { grid-column: 5; }

.tool-mute {
  grid-column: 7;
  border-bottom: 4px solid var(--line);
}

/* Symptom picker */
.screen-symptoms {
  position: relative;
  display: flex;
  flex-direction: column;
  min-height: 560px;
}

.tab {
  width: 304px;
  margin-left: 352px;
  padding: 20px 0;
  border: 4px solid var(--line);
  border-top: 0;
  background: var(--fill);
  text-align: center;
}

.bubble {
  position: absolute;
  border-radius: 50%;
}

.sneezing {
  top: 86px;
  left: 280px;
  width: 132px;
  height: 132px;
}

.bleeding {
  top: 100px;
  left: 682px;
  width: 106px;
  height: 106px;
}

.coughing {
  top: 214px;
  left: 102px;
  width: 126px;
  height: 126px;
}

.throwing {
  top: 228px;
  left: 454px;
  width: 112px;
  height: 112px;
}

.detail {
  width: 458px;
  margin: auto 0 0 282px;
  padding: 0 24px;
  border: 4px solid var(--line);
  border-bottom: 0;
}

.detail-title {
  width: 400px;
  padding: 2px 0;
  border: 4px solid var(--line);
  border-top: 0;
  text-align: center;
}

.detail-text {
  display: flex;
  justify-content: center;
  margin: 18px 0 20px;
}

.confirm {
  width: 400px;
  height: 42px;
  border-bottom: 0;
}
```
